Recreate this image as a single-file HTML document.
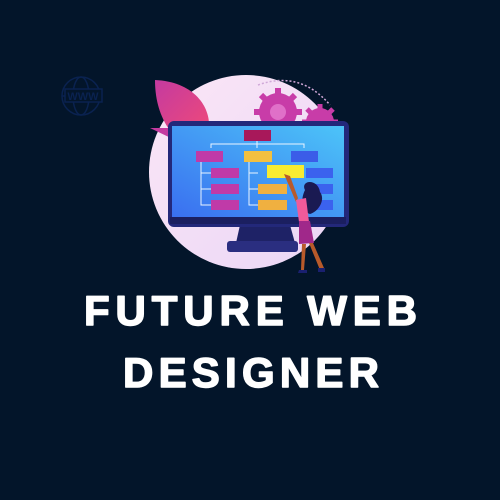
<!DOCTYPE html>
<html><head><meta charset="utf-8"><style>
html,body{margin:0;padding:0;background:#03152a;}
svg{display:block}
</style></head><body>
<svg width="500" height="500" viewBox="0 0 500 500" xmlns="http://www.w3.org/2000/svg">
<defs>
<linearGradient id="scr" x1="0" y1="1" x2="1" y2="0"><stop offset="0" stop-color="#3a6ff0"/><stop offset="1" stop-color="#4cc4f8"/></linearGradient>
<linearGradient id="circ" x1="0" y1="0" x2="1" y2="1"><stop offset="0" stop-color="#fbe6f6"/><stop offset="1" stop-color="#ead6f6"/></linearGradient>
<linearGradient id="leaf" x1="0" y1="0" x2="1" y2="1"><stop offset="0" stop-color="#c43aa0"/><stop offset="1" stop-color="#f04a78"/></linearGradient>
</defs>
<rect width="500" height="500" fill="#03152a"/>
<!-- www globe -->
<g stroke="#0a2250" stroke-width="1.5" fill="none">
<circle cx="81" cy="96" r="19"/><ellipse cx="81" cy="96" rx="8" ry="19"/><line x1="62" y1="96" x2="100" y2="96"/>
<rect x="65" y="89" width="37" height="13" fill="#03152a"/>
</g>
<text x="83" y="100" font-family="Liberation Sans" font-size="11" font-weight="bold" fill="#0a2250" text-anchor="middle">WWW</text>
<!-- circle -->
<circle cx="246" cy="172" r="97" fill="url(#circ)"/>
<!-- leaf -->
<path d="M155 80 C200 82 215 115 207 137 L175 137 C160 120 155 100 155 80Z" fill="url(#leaf)"/>
<path d="M150 128 L175 128 L175 140 Z" fill="#c43aa0"/>
<!-- gears -->
<g fill="#c83ca8">
<circle cx="278" cy="112" r="19"/>
<g stroke="#c83ca8" stroke-width="6"><line x1="278" y1="88" x2="278" y2="136"/><line x1="254" y1="112" x2="302" y2="112"/><line x1="261" y1="95" x2="295" y2="129"/><line x1="295" y1="95" x2="261" y2="129"/></g>
<circle cx="278" cy="112" r="8" fill="#e070c8"/>
<circle cx="320" cy="122" r="14"/>
<g stroke="#c83ca8" stroke-width="5"><line x1="320" y1="104" x2="320" y2="140"/><line x1="302" y1="122" x2="338" y2="122"/><line x1="307" y1="109" x2="333" y2="135"/><line x1="333" y1="109" x2="307" y2="135"/></g>
</g>
<path d="M258 85 Q300 70 330 105" stroke="#d0a8d8" stroke-width="1.5" stroke-dasharray="2 2" fill="none"/>
<!-- monitor -->
<path d="M240 225 L290 225 L295 243 L236 243Z" fill="#1e2266"/>
<rect x="227" y="241" width="71" height="11" rx="3" fill="#2a2e80"/>
<rect x="168" y="121" width="181" height="106" rx="6" fill="#23287a"/>
<rect x="172" y="126" width="172" height="91" fill="url(#scr)"/>
<rect x="170" y="217" width="176" height="7" fill="#1b1f60"/>
<!-- boxes -->
<rect x="244" y="130" width="27" height="11" fill="#a8185a"/>
<g stroke="#eaf4ff" stroke-width="1" fill="none">
<path d="M211 148 V144 H304 V148 M257 141 V148"/>
<path d="M201 162 V173 H211 M201 173 V189 H211 M201 189 V205 H211"/>
<path d="M249 162 V173 H258 M249 173 V189 H258 M249 189 V205 H258"/>
</g>
<rect x="196" y="151" width="27" height="11" fill="#c03aa8"/>
<rect x="244" y="151" width="28" height="11" fill="#f2c040"/>
<rect x="291" y="151" width="27" height="11" fill="#3b5de8"/>
<g fill="#c03aa8"><rect x="211" y="168" width="28" height="10"/><rect x="211" y="184" width="28" height="10"/><rect x="211" y="200" width="28" height="10"/></g>
<g fill="#f0b040"><rect x="258" y="184" width="29" height="10"/><rect x="258" y="200" width="29" height="10"/></g>
<g fill="#3b62ee"><rect x="306" y="168" width="27" height="10"/><rect x="306" y="184" width="27" height="10"/><rect x="306" y="200" width="27" height="10"/></g>
<rect x="267" y="165" width="37" height="13" fill="#f8ec30"/>
<!-- woman -->
<path d="M305 190 C300 180 318 178 320 192 C326 200 318 212 310 214 C302 212 300 200 305 190Z" fill="#1a1a52"/>
<path d="M284 174 L290 176 L298 198 L296 202 Z" fill="#b85a2a"/>
<path d="M296 200 L306 198 L309 222 L299 222Z" fill="#f05a9a"/>
<path d="M299 221 L310 221 L314 243 L299 244Z" fill="#a0288a"/>
<path d="M302 244 L306 244 L304 270 L301 270Z M309 243 L313 243 L324 268 L320 270Z" fill="#b85a2a"/>
<path d="M299 270 L307 270 L307 273 L298 273Z M318 268 L325 268 L325 272 L318 272Z" fill="#1a2070"/>
<!-- text -->
<g font-family="Liberation Sans, DejaVu Sans, sans-serif" font-weight="bold" font-size="42" fill="#ffffff" stroke="#ffffff" stroke-width="1.5" stroke-linejoin="round">
<text x="84" y="325" textLength="333" lengthAdjust="spacing">FUTURE WEB</text>
<text x="123" y="387" textLength="256" lengthAdjust="spacing">DESIGNER</text>
</g>
</svg>
</body></html>
